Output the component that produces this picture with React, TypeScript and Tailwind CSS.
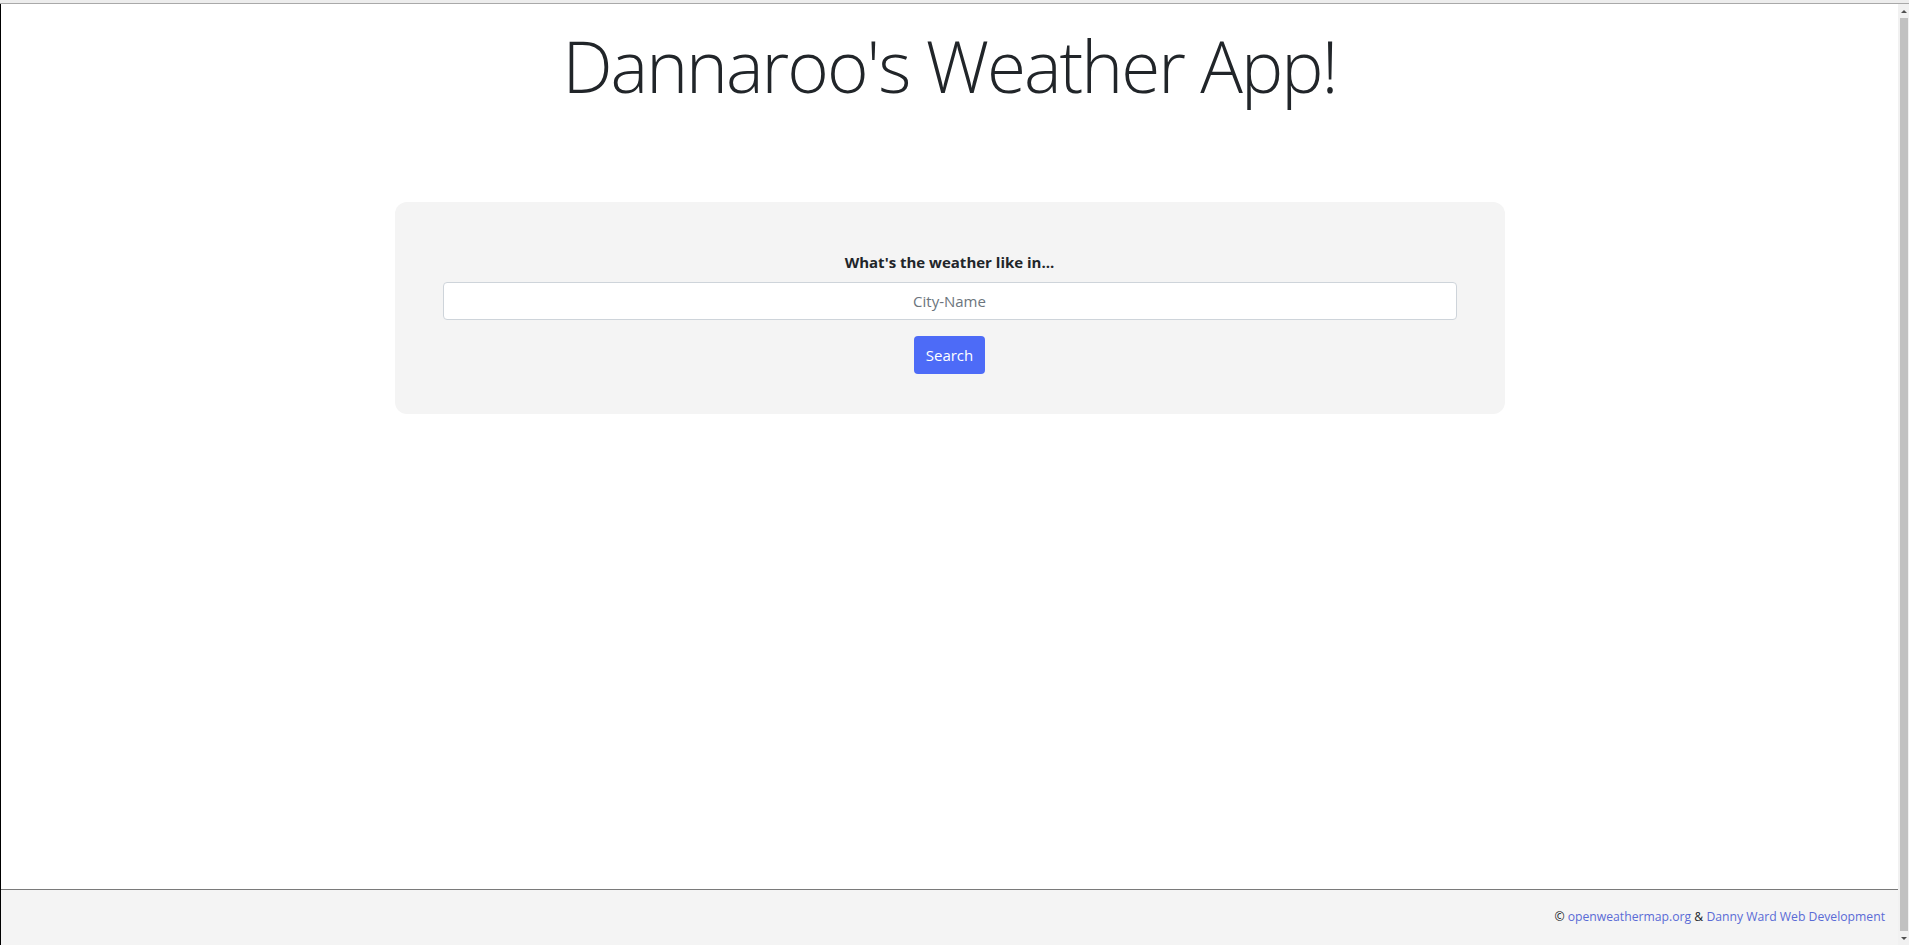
import { useState } from 'react'

export default function App() {
  const [city, setCity] = useState('')

  return (
    <div className="h-[945px] flex flex-col bg-white overflow-hidden" style={{ fontFamily: '"Open Sans", "Noto Sans", sans-serif' }}>
      {/* window top edge */}
      <div className="h-[4px] bg-[#ededed] border-b border-[#a9a9a9] shrink-0" />

      <div className="flex flex-1 min-h-0">
        <div className="flex-1 flex flex-col border-l border-black min-w-0">
          <main className="flex-1">
            <h1 className="pt-[19px] text-center text-[71px] leading-[1.2] font-light tracking-[-2px] text-[#212529]">
              Dannaroo's Weather App!
            </h1>

            <div className="mt-[94px] mx-auto w-[1110px] rounded-xl bg-[#f4f4f4] px-12 pt-12 pb-10">
              <form
                className="flex flex-col items-center"
                onSubmit={(e) => e.preventDefault()}
              >
                <label htmlFor="city" className="text-[15px] leading-6 font-bold text-[#212529] mb-2">
                  What's the weather like in...
                </label>
                <input
                  id="city"
                  type="text"
                  placeholder="City-Name"
                  value={city}
                  onChange={(e) => setCity(e.target.value)}
                  className="w-full h-[38px] px-3 border border-[#ced4da] rounded bg-white text-center text-[15px] text-[#495057] placeholder:text-[#6c757d] focus:outline-none"
                />
                <button
                  type="submit"
                  className="mt-4 h-[38px] px-3 rounded bg-[#4d6bf7] text-white text-[15px]"
                >
                  Search
                </button>
              </form>
            </div>
          </main>

          {/* Footer */}
          <footer className="h-[56px] shrink-0 border-t border-[#7a7a7a] bg-[#f4f4f4] flex items-center justify-end pr-[13px] text-[12.2px] text-[#212529]">
            <span>
              © <a href="#" className="text-[#5a6bd6]">openweathermap.org</a> &amp;{' '}
              <a href="#" className="text-[#5a6bd6]">Danny Ward Web Development</a>
            </span>
          </footer>
        </div>

        {/* scrollbar */}
        <div className="w-[11px] shrink-0 bg-[#f1f1f1] flex flex-col items-center">
          <div className="h-[14px] flex items-center justify-center">
            <div className="w-0 h-0 border-l-[3px] border-r-[3px] border-b-[3px] border-l-transparent border-r-transparent border-b-[#505050]" />
          </div>
          <div className="flex-1 w-[8px] bg-[#c1c1c1]" />
          <div className="h-[14px] flex items-center justify-center">
            <div className="w-0 h-0 border-l-[3px] border-r-[3px] border-t-[3px] border-l-transparent border-r-transparent border-t-[#505050]" />
          </div>
        </div>
      </div>
    </div>
  )
}
